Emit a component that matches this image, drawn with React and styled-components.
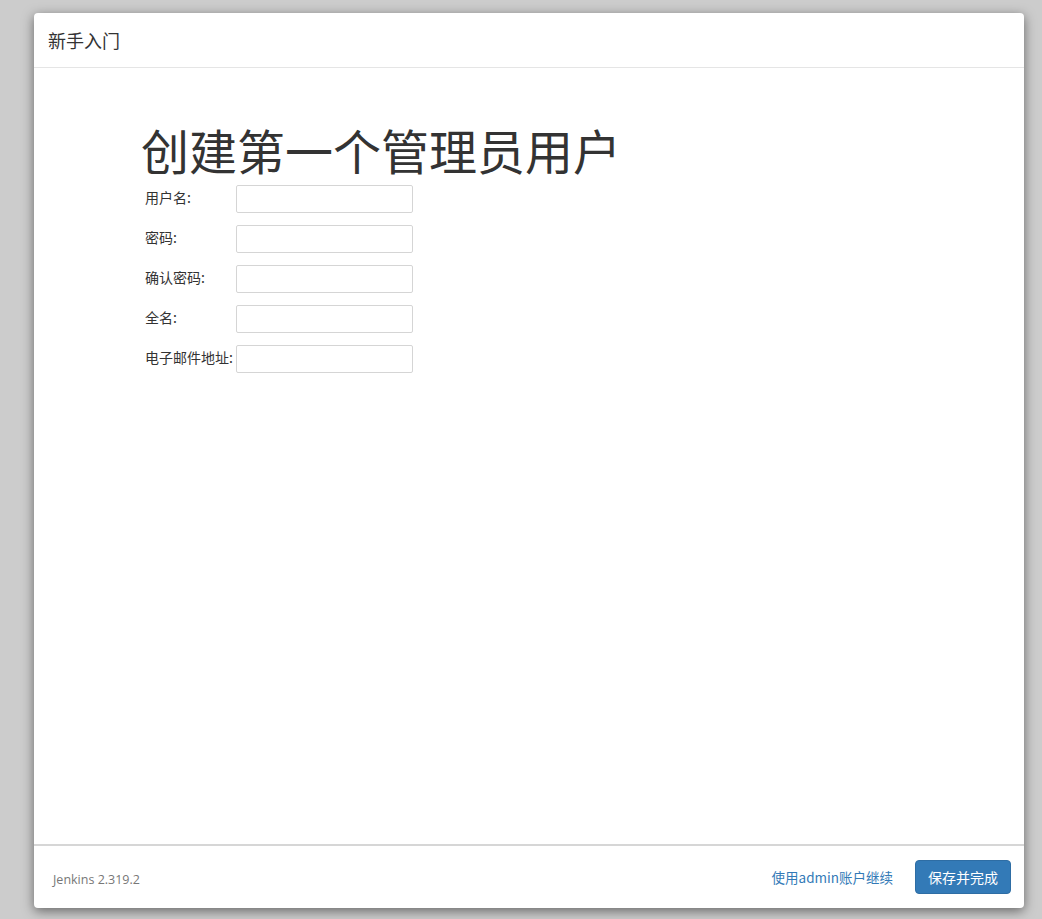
import React from "react";
import { styled, createGlobalStyle } from "styled-components";

const GlobalStyle = createGlobalStyle`
  html, body {
    margin: 0;
    padding: 0;
    background: #cccccc;
    font-family: "Noto Sans CJK SC", "Open Sans", "Noto Sans", sans-serif;
    color: #333;
  }
`;

const Page = styled.div`
  padding: 13px 18px 11px 34px;
`;

const Card = styled.div`
  width: 990px;
  height: 895px;
  background: #fff;
  border-radius: 4px;
  box-shadow: 0 3px 12px rgba(0, 0, 0, 0.5);
  display: flex;
  flex-direction: column;
  overflow: hidden;
`;

const Header = styled.div`
  height: 54px;
  display: flex;
  align-items: center;
  padding-left: 14px;
  border-bottom: 1px solid #e5e5e5;
  font-size: 18px;
  color: #333;
`;

const Body = styled.div`
  flex: 1;
  padding: 57px 0 0 107px;
`;

const Title = styled.h1`
  margin: 0 0 12px;
  font-size: 48px;
  line-height: 48px;
  font-weight: 400;
  color: #333;
`;

const Form = styled.div`
  display: flex;
  flex-direction: column;
  gap: 12px;
  padding-left: 4px;
`;

const Row = styled.div`
  display: flex;
  align-items: center;
`;

const Label = styled.label`
  width: 91px;
  font-size: 14px;
  color: #333;
  white-space: nowrap;
  margin-top: -4px;
`;

const Input = styled.input`
  width: 177px;
  height: 28px;
  box-sizing: border-box;
  border: 1px solid #d5d5d5;
  border-radius: 2px;
  padding: 0 6px;
  font-size: 14px;
  outline: none;
`;

const Footer = styled.div`
  height: 62px;
  border-top: 2px solid #d6d6d6;
  display: flex;
  align-items: center;
  padding: 0 13px 0 19px;
`;

const Version = styled.span`
  font-family: "Open Sans", "Noto Sans", sans-serif;
  font-size: 12.5px;
  color: #777;
  margin-top: 4px;
`;

const Spacer = styled.div`
  flex: 1;
`;

const LinkButton = styled.a`
  font-size: 13.5px;
  color: #337ab7;
  text-decoration: none;
  margin-right: 22px;
  cursor: pointer;
`;

const PrimaryButton = styled.button`
  width: 96px;
  height: 34px;
  background: #337ab7;
  border: 1px solid #2e6da4;
  border-radius: 4px;
  color: #fff;
  font-family: "Noto Sans CJK SC", sans-serif;
  font-size: 14px;
  padding: 0;
  cursor: pointer;
`;

const fields = [
  { label: "用户名:", type: "text" },
  { label: "密码:", type: "password" },
  { label: "确认密码:", type: "password" },
  { label: "全名:", type: "text" },
  { label: "电子邮件地址:", type: "email" },
];

export default function App() {
  return (
    <>
      <GlobalStyle />
      <Page>
        <Card>
          <Header>新手入门</Header>
          <Body>
            <Title>创建第一个管理员用户</Title>
            <Form>
              {fields.map((f) => (
                <Row key={f.label}>
                  <Label>{f.label}</Label>
                  <Input type={f.type} />
                </Row>
              ))}
            </Form>
          </Body>
          <Footer>
            <Version>Jenkins 2.319.2</Version>
            <Spacer />
            <LinkButton>使用admin账户继续</LinkButton>
            <PrimaryButton>保存并完成</PrimaryButton>
          </Footer>
        </Card>
      </Page>
    </>
  );
}
